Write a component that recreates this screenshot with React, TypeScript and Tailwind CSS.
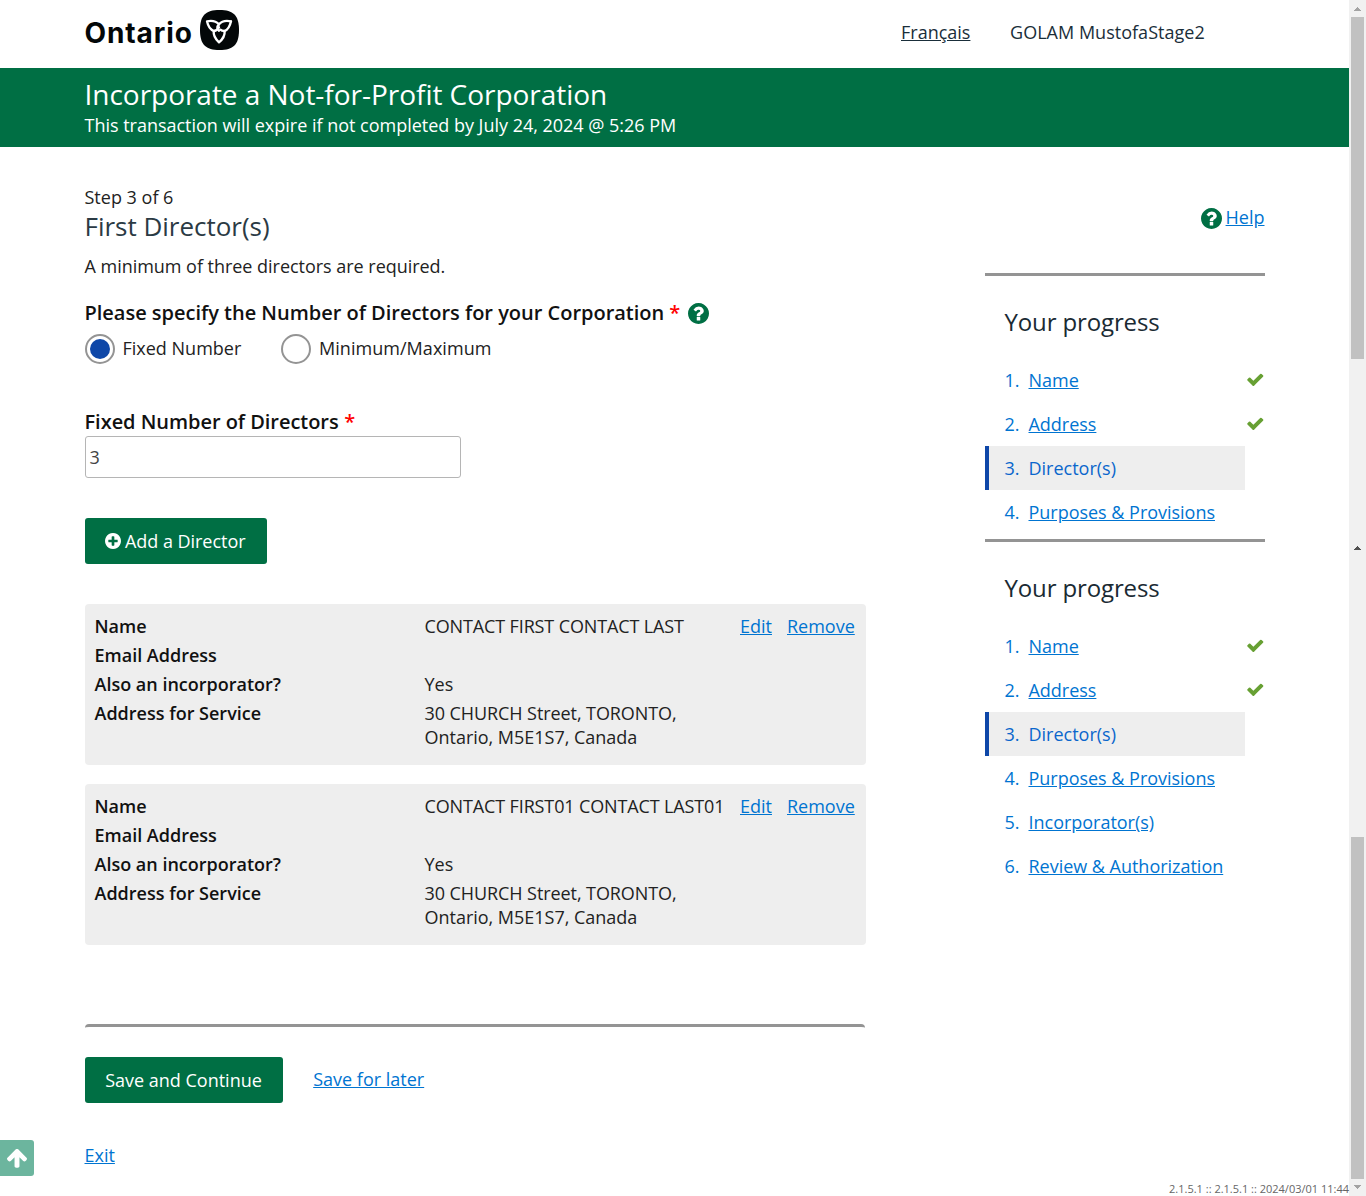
const LINK = "text-[#0074d1] underline";

const ICONS = {
  check:
    "M1671 566q0 40-28 68l-724 724-136 136q-28 28-68 28t-68-28l-136-136-362-362q-28-28-28-68t28-68l136-136q28-28 68-28t68 28l294 295 656-657q28-28 68-28t68 28l136 136q28 28 28 68z",
  arrowUp:
    "M1675 971q0 51-37 90l-75 75q-38 38-91 38-54 0-90-38l-294-293v704q0 52-37.500 84.500t-90.500 32.500h-128q-53 0-90.500-32.500t-37.500-84.500v-704l-294 293q-36 38-90 38t-90-38l-75-75q-38-38-38-90 0-53 38-91l651-651q35-37 90-37 54 0 91 37l651 651q37 39 37 91z",
  question:
    "M1024 1376v-192q0-14-9-23t-23-9h-192q-14 0-23 9t-9 23v192q0 14 9 23t23 9h192q14 0 23-9t9-23zm256-672q0-88-55.500-163t-138.500-116-170-41q-243 0-371 213-15 24 8 42l132 100q7 6 19 6 16 0 25-12 53-68 86-92 34-24 86-24 48 0 85.500 26t37.500 59q0 38-20 61t-68 45q-63 28-115.500 86.500t-52.500 125.500v36q0 14 9 23t23 9h192q14 0 23-9t9-23q0-19 21.500-49.500t54.500-49.500q32-18 49-28.500t46-35 44.500-48 28-60.500 12.500-81zm384 192q0 209-103 385.500t-279.500 279.500-385.500 103-385.500-103-279.500-279.500-103-385.500 103-385.500 279.500-279.500 385.500-103 385.500 103 279.500 279.500 103 385.500z",
  plus: "M1344 960v-128q0-26-19-45t-45-19h-256v-256q0-26-19-45t-45-19h-128q-26 0-45 19t-19 45v256h-256q-26 0-45 19t-19 45v128q0 26 19 45t45 19h256v256q0 26 19 45t45 19h128q26 0 45-19t19-45v-256h256q26 0 45-19t19-45zm320-64q0 209-103 385.500t-279.500 279.500-385.500 103-385.500-103-279.500-279.500-103-385.500 103-385.500 279.500-279.500 385.500-103 385.500 103 279.500 279.500 103 385.500z",
};

function Icon({ name, viewBox = "128 128 1536 1536", className }: { name: keyof typeof ICONS; viewBox?: string; className: string }) {
  return (
    <svg viewBox={viewBox} className={`shrink-0 fill-current ${className}`}>
      <path d={ICONS[name]} />
    </svg>
  );
}

function OntarioLogo() {
  return (
    <div className="flex items-start">
      <span className="w-[115px] whitespace-nowrap pt-[16px] font-['Inter'] text-[28px] leading-[34px] font-bold tracking-[0.9px] text-[#030708]">
        Ontario
      </span>
      <svg className="mt-[10px]" width="39" height="40" viewBox="0 0 117 120">
        <path
          d="M58.500 0C100 0 117 16 117 60C117 104 100 120 58.500 120C17 120 0 104 0 60C0 16 17 0 58.500 0Z"
          fill="#030708"
        />
        <g fill="none" stroke="#fff" strokeWidth="7" strokeLinecap="round" strokeLinejoin="round">
          <path d="M57 43C48 33 36 31 21 34C24 48 31 59 41 63C48 63 53 58 57 52" />
          <path d="M93 34C78 31 65 33 57 43C50 50 51 58 57 62" />
          <path d="M93 34C90 48 84 59 74 63C68 63 64 62 61 59" />
          <path d="M41 63C40 77 47 88 57 97C68 88 75 77 74 63" />
        </g>
      </svg>
    </div>
  );
}

function Required() {
  return <span className="text-[#f00]">*</span>;
}

type Director = { name: string; address: string[] };

const directors: Director[] = [
  { name: "CONTACT FIRST CONTACT LAST", address: ["30 CHURCH Street, TORONTO,", "Ontario, M5E1S7, Canada"] },
  { name: "CONTACT FIRST01 CONTACT LAST01", address: ["30 CHURCH Street, TORONTO,", "Ontario, M5E1S7, Canada"] },
];

function DirectorCard({ director }: { director: Director }) {
  return (
    <section className="flex h-[161px] w-[781px] rounded-[4px] bg-[#eee] pt-[10px] pl-[9.5px]">
      <dl className="grid w-[645.500px] grid-cols-[330px_1fr] content-start gap-y-[5px] whitespace-nowrap">
        <dt className="font-semibold text-[#111]">Name</dt>
        <dd className="tracking-[-0.13px]">{director.name}</dd>
        <dt className="font-semibold text-[#111]">Email Address</dt>
        <dd />
        <dt className="font-semibold text-[#111]">Also an incorporator?</dt>
        <dd>Yes</dd>
        <dt className="font-semibold text-[#111]">Address for Service</dt>
        <dd>
          {director.address.map((line, i) => (
            <div key={line} className={i === 0 ? "tracking-[-0.08px]" : "tracking-[-0.02px]"}>
              {line}
            </div>
          ))}
        </dd>
      </dl>
      <div className="flex gap-[15px]">
        <a className={LINK}>Edit</a>
        <a className={LINK}>Remove</a>
      </div>
    </section>
  );
}

type Step = { label: string; done?: boolean; current?: boolean };

const steps: Step[] = [
  { label: "Name", done: true },
  { label: "Address", done: true },
  { label: "Director(s)", current: true },
  { label: "Purposes & Provisions" },
  { label: "Incorporator(s)" },
  { label: "Review & Authorization" },
];

function Progress({ count }: { count: number }) {
  return (
    <nav className="h-[266px] border-t-[3px] border-[#949494] pt-[30px]">
      <h3 className="pl-[19.5px] text-[24px] leading-[32px] tracking-[-0.13px] text-[#1a2a33]">Your progress</h3>
      <ol className="pt-[20px] whitespace-nowrap text-[#0074d1]">
        {steps.slice(0, count).map((step, i) => (
          <li
            key={step.label}
            className={
              step.current
                ? "flex h-[44px] w-[260px] items-center border-l-4 border-[#0e47a8] bg-[#eee] pl-[15.5px] text-[#0a66cc]"
                : "flex h-[44px] items-center pl-[19.5px]"
            }
          >
            <span className="w-[24px]">{i + 1}.</span>
            <span className={step.current ? "" : "tracking-[-0.02px] underline"}>{step.label}</span>
            {step.done && (
              <Icon name="check" viewBox="121 270 1550 1252" className="mr-[1.5px] mb-[1px] ml-auto h-[13px] w-[16.5px] text-[#67a033]" />
            )}
          </li>
        ))}
      </ol>
    </nav>
  );
}

function ScrollBar() {
  return (
    <div className="flex h-[1196px] w-[17px] flex-col items-center bg-[#f1f1f1]">
      <svg width="17" height="17" viewBox="0 0 17 17" shapeRendering="crispEdges">
        <path d="M5 11H12L8.500 7Z" fill="#a3a3a3" />
      </svg>
      <div className="h-[342px] w-[13px] bg-[#c1c1c1]" />
      <div className="h-[181px]" />
      <svg width="17" height="17" viewBox="0 0 17 17" shapeRendering="crispEdges">
        <path d="M5 10H12L8.500 6Z" fill="#505050" />
      </svg>
      <div className="h-[280px]" />
      <div className="h-[342px] w-[13px] bg-[#c1c1c1]" />
      <svg width="17" height="17" viewBox="0 0 17 17" shapeRendering="crispEdges">
        <path d="M5 6H12L8.500 10Z" fill="#a3a3a3" />
      </svg>
    </div>
  );
}

export default function App() {
  return (
    <div className="relative flex h-[1196px] w-[1366px] overflow-hidden bg-white font-['Open_Sans',sans-serif] text-[18px] leading-[24px] text-[#222]">
      <div className="w-[1349px]">
        <header className="flex h-[68px] pl-[84.500px]">
          <OntarioLogo />
          <div className="ml-auto flex w-[448px] gap-[40px] pt-[20px] text-[#1a2e3a]">
            <a className="underline">Français</a>
            <span className="-ml-[0.400px] tracking-[0.02px]">GOLAM MustofaStage2</span>
          </div>
        </header>
        <div className="h-[79px] bg-[#006f44] pt-[8px] pl-[84.500px] text-white">
          <h1 className="text-[28px] leading-[36px] tracking-[-0.03px]">Incorporate a Not-for-Profit Corporation</h1>
          <p className="pt-px tracking-[-0.012px]">This transaction will expire if not completed by July 24, 2024 @ 5:26 PM</p>
        </div>

        <div className="flex justify-between pr-[84px] pl-[85px]">
          <main className="w-[781px] pt-[38px]">
            <p className="-ml-[0.500px]">Step 3 of 6</p>
            <h2 className="-ml-[0.500px] pt-px text-[26px] leading-[32px] tracking-[-0.02px] text-[#2b3a44]">First Director(s)</h2>
            <p className="-ml-[0.500px] pt-[12px] tracking-[-0.03px]">A minimum of three directors are required.</p>

            <div className="-ml-[0.500px] flex items-center gap-[5px] pt-[21px] text-[20px] leading-[28px] font-semibold text-[#111]">
              <span className="tracking-[-0.015px]">Please specify the Number of Directors for your Corporation</span>
              <Required />
              <Icon name="question" className="ml-[3px] size-[21px] text-[#006f44]" />
            </div>
            <div className="flex h-[45px] pt-[7px]">
              <label className="flex w-[196px] gap-[7.5px]">
                <span className="grid size-[30px] place-items-center rounded-full border-2 border-[#949494]">
                  <span className="size-[20px] rounded-full bg-[#0e47a8]" />
                </span>
                <span className="pt-[2px]">Fixed Number</span>
              </label>
              <label className="flex gap-[8px]">
                <span className="size-[30px] rounded-full border-2 border-[#949494]" />
                <span className="pt-[2px] tracking-[0.04px]">Minimum/Maximum</span>
              </label>
            </div>

            <div className="-ml-[0.500px] flex gap-[5.500px] pt-[36px] text-[20px] leading-[28px] font-semibold text-[#111]">
              <span className="tracking-[-0.04px]">Fixed Number of Directors</span>
              <Required />
            </div>
            <div className="h-[42px] w-[376px] rounded-[3px] border border-[#b5b5b5] pt-[8px] pl-[3.500px] text-[#444]">
              3
            </div>

            <button className="mt-[40px] flex h-[46px] w-[182px] items-center rounded-[3px] bg-[#006f44] pl-[20px] text-white">
              <Icon name="plus" className="mr-[4px] size-[16px]" />
              <span className="tracking-[-0.04px]">Add a Director</span>
            </button>

            <div className="flex flex-col gap-[19px] pt-[40px]">
              {directors.map((director) => (
                <DirectorCard key={director.name} director={director} />
              ))}
            </div>

            <div className="mt-[79px] h-[6px] w-[780px] rounded-t-[4px] border-t-[3px] border-[#949494]" />
            <div className="flex gap-[30.200px] pt-[27px]">
              <button className="h-[46px] w-[198px] rounded-[3px] bg-[#006f44] pr-px text-white">Save and Continue</button>
              <a className={`${LINK} pt-[10px]`}>Save for later</a>
            </div>
            <p className="-ml-[0.500px] pt-[40px]">
              <a className={LINK}>Exit</a>
            </p>
          </main>

          <aside className="w-[280px] pt-[58px]">
            <div className="mb-[44px] flex justify-end gap-[4px] pr-[0.500px]">
              <Icon name="question" className="mt-[3px] size-[21px] text-[#006f44]" />
              <a className={LINK}>Help</a>
            </div>
            <Progress count={4} />
            <Progress count={6} />
          </aside>
        </div>
      </div>

      <ScrollBar />

      <button className="absolute top-[1140px] left-0 grid h-[36px] w-[34px] place-items-center rounded-r-[3px] bg-[#6cb59e] text-white">
        <Icon name="arrowUp" viewBox="117 223 1558 1441" className="mt-px h-[19px] w-[20px]" />
      </button>
      <small className="absolute right-[17px] bottom-0 text-[11px] leading-[15px] text-[#666]">
        2.1.5.1 :: 2.1.5.1 :: 2024/03/01 11:44
      </small>
    </div>
  );
}
